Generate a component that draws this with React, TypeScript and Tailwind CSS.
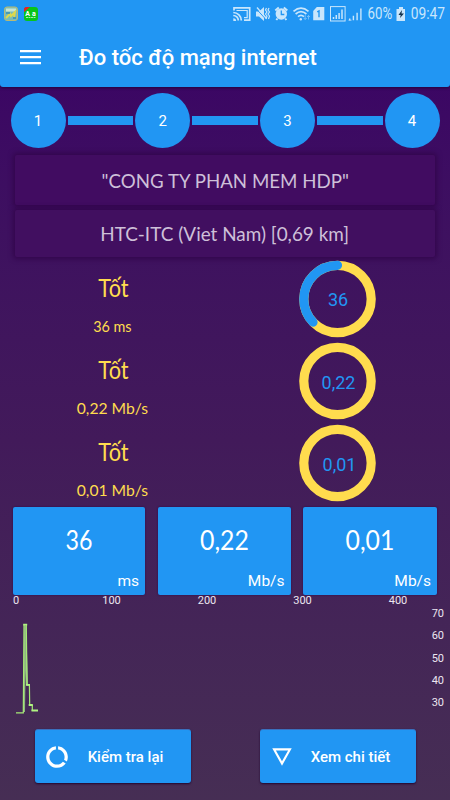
import { ReactNode } from "react";

const STEPS = [1, 2, 3, 4];

const RESULTS = [
  { rating: "Tốt", label: "36 ms", value: "36", progress: 0.37, labelClass: "scale-x-[.9]", ringClass: "pt-px pl-px" },
  { rating: "Tốt", label: "0,22 Mb/s", value: "0,22", progress: 0, labelClass: "scale-x-[.98]", ringClass: "pt-[4px] pl-[2px]" },
  { rating: "Tốt", label: "0,01 Mb/s", value: "0,01", progress: 0, labelClass: "scale-x-[.98]", ringClass: "pt-[4px] pl-[4px]" },
];

const TILES = [
  { value: "36", unit: "ms", width: "w-[132px]", valueClass: "scale-x-[.86]" },
  { value: "0,22", unit: "Mb/s", width: "w-[133px]", valueClass: "scale-x-[.92]" },
  { value: "0,01", unit: "Mb/s", width: "w-[134px]", valueClass: "scale-x-[.92]" },
];

const X_TICKS = [0, 100, 200, 300, 400];
const Y_TICKS = [70, 60, 50, 40, 30];

function StatusBar() {
  return (
    <div className="flex h-[27px] items-center pl-1 pr-[5px] text-[#c9e6fc]">
      <svg width="40" height="16" viewBox="4 5 40 16">
        <rect x="4.5" y="6" width="13" height="13.5" rx="2.5" fill="#79bcb8" stroke="#b9ba72" />
        <rect x="6" y="7.5" width="10" height="3" fill="#c8e5d5" />
        <path d="M6 17l4-4 1 2 4-4-1 5" stroke="#ddd94c" strokeWidth="2" fill="none" />
        <path d="M6 12h4M13 17h3" stroke="#368db5" strokeWidth="1.5" />
        <rect x="24" y="6" width="14" height="14" rx="3" fill="#08c51a" />
        <path d="M24 11V8.500q0-2.500 2.500-2.500H30z" fill="#ed1c24" />
        <text x="25.200" y="14.500" fontSize="7" fontWeight="700" fill="#fff" fontFamily="Roboto, sans-serif">A</text>
        <text x="32" y="14.500" fontSize="7" fontWeight="700" fill="#fff" fontFamily="Roboto, sans-serif">a</text>
        <path d="M26 16.500h10" stroke="#a2eba8" strokeDasharray="2 .5" />
      </svg>

      <svg className="ml-auto" width="132" height="18" viewBox="232 4 132 18" fill="currentColor">
        {/* cast */}
        <g fill="none" stroke="currentColor" strokeWidth="1.700">
          <path d="M234 9.500V6.800h15.700v12.400H244" />
          <path d="M236.500 9.500h10.700v7.200H244" strokeWidth="1.200" />
          <path d="M233.300 11.500a8 8 0 0 1 8 8M233.300 14.500a5 5 0 0 1 5 5" />
        </g>
        <path d="M233.300 17.200a2.800 2.800 0 0 1 2.800 2.800h-2.800z" />
        {/* muted, vibrating */}
        <path d="M256 10.500h3l5-4.500v14l-5-4.500h-3z" />
        <path d="M256 7.500l10.500 11.500" stroke="#2196f3" strokeWidth="1" />
        <path d="M257 6.500l9.500 11" stroke="currentColor" strokeWidth="1.300" />
        <path d="M266.500 7l-1 2 1.500 2-1.500 2 1.500 2-1 3M269 7l-1 2 1.500 2-1.500 2 1.500 2-1 3" fill="none" stroke="currentColor" strokeWidth="1.200" />
        {/* alarm */}
        <circle cx="281.300" cy="13" r="5.700" />
        <path d="M275.300 9.500l3.500-3M287.300 9.500l-3.500-3M277.500 17.500l-1.200 1.500M285.200 17.500l1.200 1.500" stroke="currentColor" strokeWidth="2" />
        <path d="M281.300 9.500v4h3" fill="none" stroke="#2196f3" strokeWidth="1.300" />
        {/* wifi */}
        <g fill="none" stroke="currentColor" strokeWidth="1.700">
          <path d="M293.500 10.300q7.500-6.500 15 0M295.600 13q5.400-4.600 10.800 0M298 15.600q3-2.600 6 0" />
        </g>
        <circle cx="300.800" cy="18.300" r="1.200" />
        <path d="M305.200 14v4.500m-1.500-1.500l1.500 1.500 1.500-1.500M308.500 18.500v-4m-1.500 1.500l1.500-1.500 1.500 1.500" fill="none" stroke="#89c7f8" strokeWidth=".8" />
        {/* sim */}
        <path d="M313.200 10l3.600-4h7.500v13.200h-11.100z" />
        <path d="M317.200 10.800l1.800-.9v6.400" fill="none" stroke="#2196f3" strokeWidth="1.400" />
        {/* signal strength */}
        <rect x="330.500" y="5.600" width="14.600" height="14.400" fill="none" stroke="currentColor" />
        <path d="M333.500 16v2M336.300 14v4M339.100 12v6M342 8.500V18" stroke="currentColor" strokeWidth="1.500" />
        <path d="M349.700 17.500v1.700M353.400 14.800v4.400M357.100 11.800v7.400M360.900 7.500v11.700" stroke="currentColor" strokeWidth="1.400" />
        <path d="M348.500 19.200h3" stroke="currentColor" strokeWidth=".8" />
      </svg>
      <div className="ml-[3px] flex w-[25px] justify-center text-[16px] leading-[27px]">
        <span className="scale-x-[.83]">60%</span>
      </div>
      <svg className="ml-[4px]" width="10" height="14" viewBox="0 0 10 14" fill="currentColor">
        <path d="M3 0h4v2h2v12H.5V2H3z" />
        <path d="M6 3L2.500 8h2.200L4 11l4-4.500H5.500z" fill="#14324d" />
      </svg>
      <div className="ml-[4px] flex w-[35px] justify-center text-[16px] leading-[27px]">
        <span className="scale-x-[.86]">09:47</span>
      </div>
    </div>
  );
}

function Ring({ progress, children }: { progress: number; children: ReactNode }) {
  const r = 33.7;
  const len = 2 * Math.PI * r;
  return (
    <div className="grid h-[78px] w-[78px] place-items-center">
      <svg className="col-start-1 row-start-1" width="78" height="78" viewBox="0.5 0 78 78" fill="none" strokeWidth="9.200">
        <circle cx="39" cy="39" r={r} stroke="#ffdc4e" />
        {progress > 0 && (
          <circle
            cx="39"
            cy="39"
            r={r}
            stroke="#2196f3"
            strokeLinecap="round"
            strokeDasharray={`${len * progress} ${len}`}
            transform="translate(78 0) scale(-1 1) rotate(-90 39 39)"
          />
        )}
      </svg>
      <div className="col-start-1 row-start-1 text-[18px] leading-5 text-[#2196f3]">{children}</div>
    </div>
  );
}

function ActionButton({ icon, children }: { icon: ReactNode; children: ReactNode }) {
  return (
    <button className="flex h-[54px] w-[156px] items-center rounded-[3px] border-t border-[#3b70bd] bg-[#2196f3] pl-[9px] text-[15px] font-medium text-white shadow-[0_1px_2px_#22072f]">
      {icon}
      <span className="flex flex-1 justify-center pr-[9px] pt-px whitespace-nowrap">{children}</span>
    </button>
  );
}

export default function App() {
  return (
    <div className="flex h-[800px] w-[450px] flex-col overflow-hidden bg-linear-to-b from-[#3a0066] via-[#421a5a] via-[55%] to-[#462e54] font-[Roboto,sans-serif]">
      <header className="h-[87px] shrink-0 rounded-b-[3px] bg-[#2196f3] shadow-[0_1px_3px_#26003b]">
        <StatusBar />
        <div className="flex h-[60px] items-center pl-5">
          <svg width="21" height="15" viewBox="0 0 21 15" stroke="#fff" strokeWidth="2.300">
            <path d="M0 1.200h21M0 7.200h21M0 13.200h21" />
          </svg>
          <h1 className="ml-[38px] pt-px text-[22px] font-medium text-white">Đo tốc độ mạng internet</h1>
        </div>
      </header>

      {/* Steps */}
      <div className="mt-[5px] flex h-[56px] shrink-0 items-center px-[10.500px]">
        {STEPS.map((step) => (
          <div key={step} className={step > 1 ? "flex flex-1 items-center" : "flex items-center"}>
            {step > 1 && <div className="mx-[2px] h-[9px] flex-1 bg-[#2196f3]" />}
            <div className="flex h-[55px] w-[55px] items-center justify-center rounded-full bg-[#2196f3] pt-[2px] text-[15px] text-white">
              {step}
            </div>
          </div>
        ))}
      </div>

      {/* Provider and server */}
      <div className="mt-[7px] flex shrink-0 flex-col gap-[5px] px-[15px] font-[Lato,sans-serif] text-[20px] text-[#cec0d9]">
        <div className="flex h-[50px] items-center justify-center rounded-[2px] bg-[#410c61] shadow-[0_0_5px_2px_#33064d]">
          <span className="scale-x-[.935] whitespace-nowrap">"CONG TY PHAN MEM HDP"</span>
        </div>
        <div className="flex h-[47px] items-center justify-center rounded-[2px] bg-[#410f60] pb-[2px] shadow-[0_0_5px_2px_#33064d]">
          <span className="scale-x-[.945] whitespace-nowrap">HTC-ITC (Viet Nam) [0,69 km]</span>
        </div>
      </div>

      <div className="mt-[3px] flex shrink-0 flex-col gap-1">
        {RESULTS.map((r) => (
          <div key={r.label} className="grid h-[78px] grid-cols-2">
            <div className="flex flex-col items-center font-[Lato,sans-serif] text-[#ffdc4e]">
              <span className="mt-[12px] ml-px scale-x-[.87] text-[25px] leading-[30px]">{r.rating}</span>
              <span className={`mt-[14px] text-[16px] leading-5 ${r.labelClass}`}>{r.label}</span>
            </div>
            <div className="flex justify-center">
              <Ring progress={r.progress}>
                <span className={`block ${r.ringClass}`}>{r.value}</span>
              </Ring>
            </div>
          </div>
        ))}
      </div>

      <div className="mt-[5px] flex shrink-0 justify-between px-[13px]">
        {TILES.map((t) => (
          <div key={t.value} className={`flex h-[88px] flex-col rounded-[2px] bg-[#2196f3] text-white shadow-[0_0_2px_#30064a] ${t.width}`}>
            <span className={`mt-[17px] text-center font-[Lato,sans-serif] text-[27px] leading-8 ${t.valueClass}`}>{t.value}</span>
            <span className="mt-auto pr-[6px] pb-[4px] text-right text-[15.500px] leading-5">{t.unit}</span>
          </div>
        ))}
      </div>

      {/* Chart */}
      <div className="grid h-[130px] shrink-0 text-[11px] text-[#ece6f0]">
        <svg className="col-start-1 row-start-1" width="450" height="130" viewBox="0 595 450 130" fill="none">
          <path d="M24 712L25.200 626L27 684" stroke="#8fb781" strokeWidth="2" />
          <path d="M16 712.800h7.300L24 625h2.300L27 684.800h2.400L29.700 705h2.600v5.500H38" stroke="#a6ea76" strokeWidth="1.200" />
          <path d="M23.200 624.700h4M26 684.800h4M28.700 705h4M31.500 710.500H38" stroke="#b0f482" strokeWidth="1.800" />
        </svg>
        <div className="col-start-1 row-start-1 flex h-3 w-[446px] leading-3">
          {X_TICKS.map((x) => (
            <span key={x} className="w-[95.500px] shrink-0">
              <span className="block w-8 text-center">{x}</span>
            </span>
          ))}
        </div>
        <div className="col-start-1 row-start-1 mt-[8px] mr-[6px] flex flex-col items-end">
          {Y_TICKS.map((y) => (
            <span key={y} className="h-[22.300px] leading-[22.300px]">{y}</span>
          ))}
        </div>
      </div>

      <div className="mt-1 flex shrink-0 gap-[69px] pl-[34.500px]">
        <ActionButton
          icon={
            <svg width="26" height="26" viewBox="0 0 24 24" fill="currentColor">
              <path d="M13 2.050v3.030c3.390.49 6 3.390 6 6.920 0 .9-.18 1.750-.48 2.540l2.600 1.530c.56-1.240.88-2.620.88-4.070 0-5.180-3.950-9.450-9-9.950zM12 19c-3.870 0-7-3.130-7-7 0-3.530 2.610-6.430 6-6.920V2.050c-5.060.5-9 4.760-9 9.950 0 5.520 4.470 10 9.990 10 3.310 0 6.240-1.610 8.060-4.090l-2.600-1.530C16.170 17.980 14.210 19 12 19z" />
            </svg>
          }
        >
          Kiểm tra lại
        </ActionButton>
        <ActionButton
          icon={
            <svg width="26" height="26" viewBox="0 0 24 24" fill="currentColor">
              <path d="M3 4l9 16 9-16H3zm3.380 2h11.250L12 16 6.380 6z" />
            </svg>
          }
        >
          Xem chi tiết
        </ActionButton>
      </div>
    </div>
  );
}
